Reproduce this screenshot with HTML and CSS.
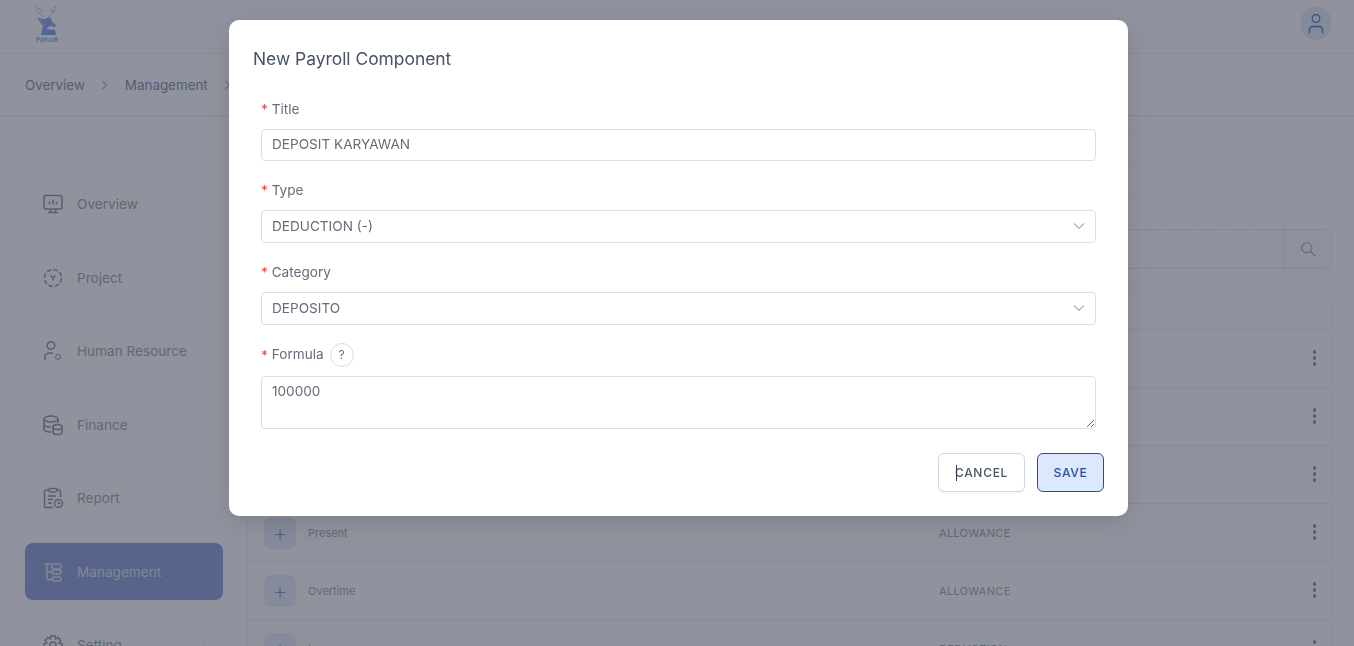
FILE: index.html
```html
<!DOCTYPE html>
<html lang="en">
<head>
  <meta charset="UTF-8" />
  <meta name="viewport" content="width=device-width, initial-scale=1.0"/>
  <title>Payroll Component</title>
  <link rel="stylesheet" href="styles.css">
</head>
<body>

  <header class="topbar">
    <div class="logo">
      <svg width="26" height="32" viewBox="0 0 26 32">
        <defs>
          <linearGradient id="deer" x1="0" y1="0" x2="1" y2="1">
            <stop offset="0" stop-color="#8fb4f0"/>
            <stop offset="1" stop-color="#7f95f0"/>
          </linearGradient>
        </defs>
        <path d="M2 1 C2 6 4 9 10 13 M4 5 L7 4 M6 8 L8.500 5 M20 1 C21 6 19 10 14 13 M20 4 L23 3 M18 8 L22 7 M16 4 L18 8" fill="none" stroke="#a5d0f5" stroke-width="1"/>
        <path d="M3 14 L11 15 L15 13 L17 14 L18 18 L22 21 L21 23 L16 22 L12 25 L21 26 L22 31 L7 31 L9 22 Z" fill="url(#deer)"/>
      </svg>
      <span class="logo-text">PaYouR</span>
    </div>
    <div class="avatar">
      <svg width="20" height="24" viewBox="0 0 20 24" fill="none" stroke="#5f74b8" stroke-width="1.300">
        <circle cx="10" cy="6.500" r="3.800"/>
        <path d="M3.500 21 V18 C3.500 15.500 5.500 14.500 7.500 14.500 H12.500 C14.500 14.500 16.500 15.500 16.500 18 V21"/>
      </svg>
    </div>
  </header>

  <div class="crumbs">
    <a href="#">Overview</a>
    <svg class="sep" width="7" height="10" viewBox="0 0 7 10"><path d="M1.500 1 L5.500 5 L1.500 9"/></svg>
    <a href="#" class="crumb-blue">Management</a>
    <svg class="sep" width="7" height="10" viewBox="0 0 7 10"><path d="M1.500 1 L5.500 5 L1.500 9"/></svg>
    <a href="#">Payroll Component</a>
  </div>

  <div class="shell">
    <aside class="sidebar">
      <a class="side-item" href="#">
        <svg class="side-icon" viewBox="0 0 22 22"><rect x="2" y="2.500" width="18" height="13.500" rx="1.500"/><path d="M6 19.500 H16 M8.500 16 V19.500 M13.500 16 V19.500 M7.500 11.500 V8.500 M11 11.500 V6.500 M14.500 11.500 V9"/></svg>
        <span>Overview</span>
      </a>
      <a class="side-item" href="#">
        <svg class="side-icon" viewBox="0 0 22 22"><circle cx="11" cy="11" r="8.500" stroke-dasharray="4.500 2.200"/><path d="M8.500 8.500 L11 10.500 L13.500 8.500 M11 10.500 V13.500"/></svg>
        <span>Project</span>
      </a>
      <a class="side-item" href="#">
        <svg class="side-icon" viewBox="0 0 22 22"><circle cx="9" cy="5.500" r="3.800"/><path d="M3 20 V17 C3 14.500 5 13 8 13 H11"/><circle cx="16" cy="17" r="2.500" stroke-dasharray="2 1"/></svg>
        <span>Human Resource</span>
      </a>
      <a class="side-item" href="#">
        <svg class="side-icon" viewBox="0 0 22 22"><ellipse cx="9" cy="5" rx="7" ry="3"/><path d="M2 5 V15 C2 17 5 18 9 18 M16 5 V9 M2 10 C2 12 5 13 9 13"/><ellipse cx="15.500" cy="13" rx="4.500" ry="2.500"/><path d="M11 13 V18 C11 20 13 20.500 15.500 20.500 S20 20 20 18 V13"/></svg>
        <span>Finance</span>
      </a>
      <a class="side-item" href="#">
        <svg class="side-icon" viewBox="0 0 22 22"><path d="M7 3 H4 C3 3 2.500 3.500 2.500 4.500 V19 C2.500 20 3 20.500 4 20.500 H11 M15 3 H17 C18 3 18.500 3.500 18.500 4.500 V10"/><rect x="7" y="1.500" width="8" height="3.500" rx="1.500"/><path d="M6 9 H14 M6 12.500 H11 M6 16 H10"/><circle cx="16.500" cy="16.500" r="4"/><path d="M16.500 14.500 V16.500 H18.500"/></svg>
        <span>Report</span>
      </a>
      <a class="side-item side-active" href="#">
        <svg class="side-icon" viewBox="0 0 22 22"><path d="M2 3 H9 M5 3 V17 C5 18 5.500 18.500 6.500 18.500 H10 M5 11 H10"/><rect x="10" y="3" width="9" height="5" rx="2"/><rect x="10" y="9" width="9" height="4" rx="2"/><rect x="10" y="16" width="9" height="4" rx="2"/></svg>
        <span>Management</span>
      </a>
      <a class="side-item" href="#">
        <svg class="side-icon" viewBox="0 0 22 22"><circle cx="11" cy="11" r="3"/><path d="M9 2 H13 L13.600 4.800 L16.200 3.500 L18.800 6.500 L17.200 8.800 L20 10 V13 L17.200 14 L18.800 16.500 L16 19 L13.600 17.500 L13 20 H9 L8.400 17.500 L6 19 L3.200 16.500 L4.800 14 L2 13 V10 L4.800 8.800 L3.200 6.500 L5.800 3.500 L8.400 4.800 Z"/></svg>
        <span>Setting</span>
      </a>
    </aside>

    <main class="content">
      <div class="search">
        <input class="search-input" type="text" />
        <div class="search-btn">
          <svg width="16" height="16" viewBox="0 0 16 16" fill="none" stroke="#a2a7b6" stroke-width="1.100"><circle cx="6.800" cy="6.800" r="5"/><path d="M10.500 10.500 L15 15"/></svg>
        </div>
      </div>

      <div class="table">
        <div class="row row-head">
          <span class="col-name">Title</span>
          <span class="col-type">Type</span>
        </div>
        <div class="row"><span class="plus">+</span><span class="col-name">Salary</span><span class="col-type">ALLOWANCE</span><span class="dots"><i></i><i></i><i></i></span></div>
        <div class="row"><span class="plus">+</span><span class="col-name">Meal</span><span class="col-type">ALLOWANCE</span><span class="dots"><i></i><i></i><i></i></span></div>
        <div class="row"><span class="plus">+</span><span class="col-name">Transport</span><span class="col-type">ALLOWANCE</span><span class="dots"><i></i><i></i><i></i></span></div>
        <div class="row"><span class="plus">+</span><span class="col-name">Present</span><span class="col-type">ALLOWANCE</span><span class="dots"><i></i><i></i><i></i></span></div>
        <div class="row"><span class="plus">+</span><span class="col-name">Overtime</span><span class="col-type">ALLOWANCE</span><span class="dots"><i></i><i></i><i></i></span></div>
        <div class="row"><span class="plus">+</span><span class="col-name">Loan</span><span class="col-type">DEDUCTION</span><span class="dots"><i></i><i></i><i></i></span></div>
      </div>
    </main>
  </div>

  <div class="overlay">
    <div class="modal">
      <h2 class="modal-title">New Payroll Component</h2>

      <form class="form">
        <div class="field">
          <label class="label"><span class="req">*</span> Title</label>
          <input class="control" type="text" value="DEPOSIT KARYAWAN" />
        </div>

        <div class="field">
          <label class="label"><span class="req">*</span> Type</label>
          <div class="control select">
            <span>DEDUCTION (-)</span>
            <svg width="12" height="8" viewBox="0 0 12 8" fill="none" stroke="#a9acb4" stroke-width="1.100"><path d="M1 1.500 L6 6.500 L11 1.500"/></svg>
          </div>
        </div>

        <div class="field">
          <label class="label"><span class="req">*</span> Category</label>
          <div class="control select">
            <span>DEPOSITO</span>
            <svg width="12" height="8" viewBox="0 0 12 8" fill="none" stroke="#a9acb4" stroke-width="1.100"><path d="M1 1.500 L6 6.500 L11 1.500"/></svg>
          </div>
        </div>

        <div class="field field-last">
          <div class="label label-help"><span class="req">*</span> <span class="help-text">Formula</span> <span class="help">?</span></div>
          <textarea class="control area">100000</textarea>
        </div>
      </form>

      <div class="actions">
        <button class="btn btn-cancel" type="button"><span class="caret"></span>CANCEL</button>
        <button class="btn btn-save" type="button">SAVE</button>
      </div>
    </div>
  </div>

</body>
</html>
```

FILE: styles.css
```css
* {
  margin: 0;
  padding: 0;
  box-sizing: border-box;
  font-family: 'Inter', 'Noto Sans', sans-serif;
}

html, body {
  height: 646px;
  overflow: hidden;
}

body {
  background-color: #fdfdfe;
  background-image: radial-gradient(circle, #f0f1f5 1px, transparent 1.5px);
  background-size: 30px 30px;
  background-position: 9px 0;
  color: #4b5563;
}

.topbar {
  height: 54px;
  display: flex;
  justify-content: space-between;
  background-color: #fdfdfe;
  border-bottom: 1px solid #eceef3;
}

.logo {
  margin-left: 34px;
  width: 26px;
  display: flex;
  flex-direction: column;
  align-items: center;
  padding-top: 4px;
}

.logo-text {
  font-size: 6px;
  font-weight: 700;
  color: #7fb4ea;
  line-height: 8px;
}

.avatar {
  width: 32px;
  height: 33px;
  margin: 7px 22px 0 0;
  border-radius: 50%;
  background-color: #e3eafb;
  display: flex;
  align-items: center;
  justify-content: center;
}

.crumbs {
  height: 61px;
  padding-left: 25px;
  display: flex;
  align-items: center;
  gap: 16.500px;
  font-size: 13.400px;
  background-color: #fdfdfe;
  border-bottom: 1px solid #e6e8ee;
  box-sizing: content-box;
}

.crumbs a {
  color: #8d93a5;
  text-decoration: none;
}

.crumbs .crumb-blue {
  color: #7f8db8;
}

.sep {
  fill: none;
  stroke: #b2b6c2;
  stroke-width: 1.200;
}

.shell {
  display: flex;
  gap: 24px;
  padding: 0 22px 0 25px;
}

.sidebar {
  width: 198px;
  flex-shrink: 0;
  padding-top: 59.700px;
  display: flex;
  flex-direction: column;
  gap: 16.500px;
}

.side-item {
  height: 57px;
  padding-left: 17px;
  display: flex;
  align-items: center;
  gap: 13px;
  border-radius: 8px;
  color: #a0a3ae;
  font-size: 13.600px;
  text-decoration: none;
}

.side-icon {
  width: 22px;
  height: 22px;
  flex-shrink: 0;
  fill: none;
  stroke: #8f93a0;
  stroke-width: 1.500;
}

.side-active {
  background-color: #8c9ed8;
  color: #dfe3ec;
}

.side-active .side-icon {
  stroke: #dfe3ec;
}

.content {
  flex: 1;
  padding-top: 113px;
}

.search {
  display: flex;
  height: 40px;
  margin-bottom: 24px;
  border: 1px solid #e6e8ee;
  border-radius: 6px;
  overflow: hidden;
}

.search-input {
  flex: 1;
  border: none;
  background-color: #fdfdfe;
}

.search-btn {
  width: 48px;
  border-left: 1px solid #e6e8ee;
  background-color: #f7f8fa;
  display: flex;
  align-items: center;
  justify-content: center;
}

.table {
  border: 1px solid #f2f3f6;
  border-bottom: none;
  border-radius: 8px 8px 0 0;
  background-color: #fdfdfe;
}

.row {
  height: 58px;
  padding-left: 16px;
  display: flex;
  align-items: center;
  border-bottom: 1px solid #e9ebf0;
  font-size: 11px;
  color: #a3a7b3;
  position: relative;
}

.row-head {
  height: 36px;
}

.plus {
  width: 32px;
  height: 32px;
  margin-right: 12px;
  border-radius: 7px;
  background-color: #e6ecf9;
  color: #7f92c8;
  font-size: 24px;
  font-weight: 200;
  line-height: 31px;
  text-align: center;
}

.col-name {
  width: 631px;
}

.row-head .col-name {
  margin-left: 44px;
}

.col-type {
  letter-spacing: 0.300px;
}

.dots {
  position: absolute;
  right: 15px;
  top: 20px;
  display: flex;
  flex-direction: column;
  gap: 2.700px;
}

.dots i {
  width: 3.500px;
  height: 3.500px;
  border-radius: 50%;
  background-color: #8b8f9c;
}

.overlay {
  position: fixed;
  inset: 0;
  background-color: rgba(35, 42, 60, 0.5);
  backdrop-filter: blur(0.6px);
}

.modal {
  position: absolute;
  left: 229px;
  top: 20px;
  width: 899px;
  height: 496px;
  padding: 28px 24px 24px;
  background-color: white;
  border-radius: 10px;
  box-shadow: 0 6px 24px rgba(0, 0, 0, 0.12);
}

.modal-title {
  font-size: 17.400px;
  font-weight: 400;
  line-height: 22px;
  color: #475264;
  margin-bottom: 27px;
}

.form {
  padding: 0 8px;
}

.field {
  display: flex;
  flex-direction: column;
  margin-bottom: 17px;
}

.label {
  font-size: 13.600px;
  line-height: 24px;
  color: #666c78;
  margin-bottom: 8px;
}

.req {
  color: #e5484d;
}

.label-help {
  display: flex;
  align-items: center;
  gap: 4px;
  height: 24px;
  margin-top: 1px;
  margin-bottom: 9px;
}

.help-text {
  margin-bottom: 2px;
}

.help {
  width: 24px;
  height: 24px;
  margin-left: 2px;
  border: 1px solid #d9dbe3;
  border-radius: 50%;
  font-size: 12px;
  line-height: 22px;
  text-align: center;
}

.control {
  width: 100%;
  height: 32px;
  padding: 0 10px 2px;
  border: 1px solid #dcdee6;
  border-radius: 4px;
  background-color: white;
  color: #666c78;
  font-size: 13.600px;
  outline: none;
}

.select {
  height: 33px;
  display: flex;
  align-items: center;
  justify-content: space-between;
}

.area {
  display: block;
  height: 53px;
  padding-top: 6px;
  line-height: 17px;
}

.field-last {
  margin-bottom: 24px;
}

.actions {
  display: flex;
  justify-content: flex-end;
  gap: 12px;
}

.btn {
  height: 39px;
  border-radius: 6px;
  font-size: 12px;
  font-weight: 500;
  letter-spacing: 0.700px;
  cursor: pointer;
}

.btn-cancel {
  width: 87px;
  position: relative;
  background-color: white;
  border: 1px solid #d5d7df;
  color: #4b5563;
  box-shadow: 0 1px 2px rgba(0, 0, 0, 0.06);
}

.caret {
  position: absolute;
  left: 17px;
  top: 11px;
  width: 1px;
  height: 16px;
  background-color: #333a48;
}

.btn-save {
  width: 67px;
  background-color: #dce8fd;
  border: 1px solid #2b4aa6;
  color: #2f4ba8;
}
```
